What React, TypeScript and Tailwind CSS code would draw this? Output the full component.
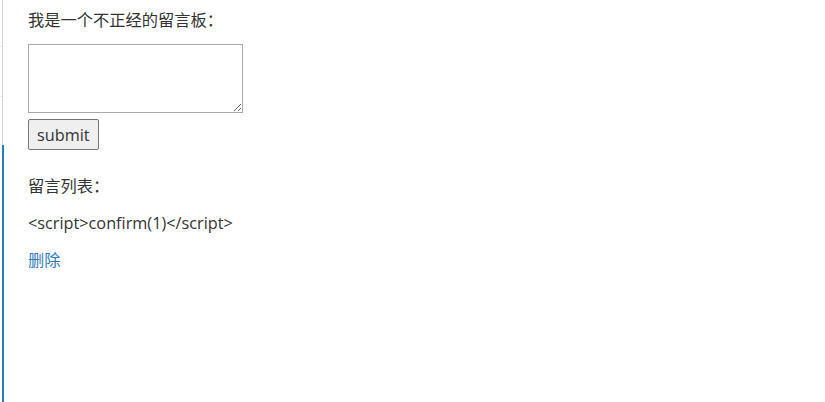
export default function App() {
    return (
        <div className="flex min-h-[402px] bg-white text-[#333] font-['Open_Sans','Noto_Sans_CJK_SC',sans-serif]">
            {/* 左侧边线 */}
            <div className="flex w-[4px] shrink-0 flex-col">
                <div className="h-[145px] w-[3px] border-r border-[#d4d4d4]">
                    <div className="mt-[46px] h-px w-[2px] bg-[#ececec]" />
                    <div className="mt-[49px] h-px w-[2px] bg-[#ececec]" />
                </div>
                <div className="flex-1 w-[4px] border-r-2 border-[#2a7ac0]" />
            </div>

            <div className="flex flex-col pl-[24px] pt-[9px] text-[16.25px] leading-[22px]">
                <p>我是一个不正经的留言板：</p>
                <textarea className="mt-[13px] h-[69px] w-[215px] border border-[#a9a9a9] bg-white" />
                <div className="mt-[6px] flex">
                    <button className="h-[31px] rounded-[2px] border border-[#767676] bg-[#efefef] px-[8px] text-[16.25px] text-[#333]">
                        submit
                    </button>
                </div>
                <p className="mt-[25px]">留言列表：</p>
                <p className="mt-[15px]">&lt;script&gt;confirm(1)&lt;/script&gt;</p>
                <a href="#" className="mt-[15px] text-[#337ab7]">删除</a>
            </div>
        </div>
    )
}
